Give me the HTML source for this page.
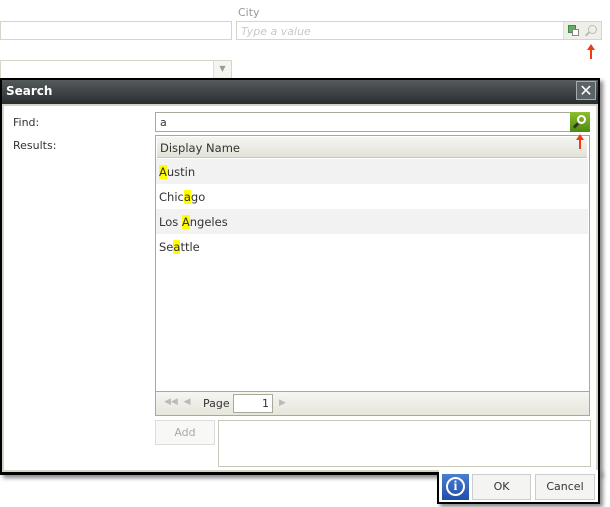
<!DOCTYPE html><html><head><style>
*{box-sizing:border-box}body{margin:0;width:610px;height:507px;background:#fff;position:relative;overflow:hidden;font-family:"DejaVu Sans","Liberation Sans",sans-serif;font-size:11px;color:#333}
.a{position:absolute}
</style></head><body>
<div class="a" style="left:0;top:21px;width:232px;height:19px;border:1px solid #d6d6c8"></div>
<div class="a" style="left:238px;top:6px;color:#999;font-size:11px">City</div>
<div class="a" style="left:236px;top:21px;width:366px;height:19px;border:1px solid #d6d6c8"></div>
<div class="a" style="left:241px;top:25px;color:#c8c8c8;font-style:italic">Type a value</div>
<div class="a" style="left:563px;top:22px;width:19px;height:17px;background:#efefe9;border-left:1px solid #ddd"><div class="a" style="left:4px;top:3px;width:8px;height:8px;background:#6a6;border:1px solid #484"></div><div class="a" style="left:8px;top:7px;width:7px;height:7px;background:#fff;border:1px solid #888"></div></div>
<div class="a" style="left:582px;top:22px;width:19px;height:17px;background:#efefe9"><div class="a" style="left:6px;top:3px;width:9px;height:9px;border:1px solid #bbb;border-radius:50%"></div><div class="a" style="left:3px;top:11px;width:5px;height:2px;background:#bbb;transform:rotate(-45deg)"></div></div>
<svg class="a" style="left:585px;top:43px" width="12" height="17"><path d="M6 16V5" stroke="#f03c14" stroke-width="2"/><path d="M2 7L6 1L10 7Z" fill="#f03c14"/></svg>
<div class="a" style="left:0;top:60px;width:232px;height:20px;border:1px solid #d6d6c8"><div class="a" style="right:0;top:0;width:18px;height:18px;background:#f4f4f0;border-left:1px solid #ddd;color:#999;font-size:8px;text-align:center;line-height:16px">▼</div></div>

<div class="a" style="left:0;top:78px;width:600px;height:397px;background:#000;box-shadow:3px 3px 4px #888"></div>
<div class="a" style="left:437px;top:470px;width:163px;height:34px;background:#000;box-shadow:3px 3px 4px #888"></div>
<div class="a" style="left:2px;top:80px;width:596px;height:24px;background:linear-gradient(#555a5c,#2a2e30)"></div>
<div class="a" style="left:6px;top:84px;color:#fff;font-weight:bold;font-size:12px">Search</div>
<div class="a" style="left:576px;top:81px;width:20px;height:19px;background:#5a6468;border:1px solid #aaa;color:#fff;font-size:16px;text-align:center;line-height:17px">✕</div>
<div class="a" style="left:2px;top:104px;width:596px;height:368px;background:#d4d4c4"></div>
<div class="a" style="left:4px;top:106px;width:592px;height:364px;background:#fff"></div>
<div class="a" style="left:439px;top:470px;width:159px;height:32px;background:#fff"></div>

<div class="a" style="left:13px;top:116px">Find:</div>
<div class="a" style="left:13px;top:139px">Results:</div>
<div class="a" style="left:155px;top:112px;width:416px;height:20px;border:1px solid #aaa89a;padding:3px 4px">a</div>
<div class="a" style="left:570px;top:112px;width:20px;height:20px;background:linear-gradient(#8cbf2c,#4f8a10)"><div class="a" style="left:7px;top:3px;width:9px;height:9px;border:2px solid #fff;border-radius:50%"></div><div class="a" style="left:3px;top:12px;width:6px;height:3px;background:#333;transform:rotate(-45deg)"></div></div>

<div class="a" style="left:155px;top:135px;width:435px;height:281px;border:1px solid #aaa89a"></div>
<div class="a" style="left:157px;top:137px;width:430px;height:21px;background:linear-gradient(#f6f6f2,#e2e2d8);border-bottom:1px solid #c8c8b8;padding:4px 3px;font-size:11.5px">Display Name</div>
<svg class="a" style="left:574px;top:133px" width="12" height="17"><path d="M6 16V5" stroke="#f03c14" stroke-width="2"/><path d="M2 7L6 1L10 7Z" fill="#f03c14"/></svg>
<div class="a" style="left:156px;top:159px;width:432px;height:25px;background:#f2f2f2;padding:6px 3px;font-size:11.5px"><span style="background:#ff0">A</span>ustin</div>
<div class="a" style="left:156px;top:184px;width:432px;height:25px;padding:6px 3px;font-size:11.5px">Chic<span style="background:#ff0">a</span>go</div>
<div class="a" style="left:156px;top:209px;width:432px;height:25px;background:#f2f2f2;padding:6px 3px;font-size:11.5px">Los <span style="background:#ff0">A</span>ngeles</div>
<div class="a" style="left:156px;top:234px;width:432px;height:25px;padding:6px 3px;font-size:11.5px">Se<span style="background:#ff0">a</span>ttle</div>
<div class="a" style="left:156px;top:391px;width:433px;height:24px;background:linear-gradient(#f6f6f2,#e6e6dc);border-top:1px solid #aaa89a"></div>
<div class="a" style="left:164px;top:397px;color:#bbb;font-size:9px">◀◀ &nbsp;◀</div>
<div class="a" style="left:203px;top:397px">Page</div>
<div class="a" style="left:233px;top:394px;width:40px;height:19px;background:#fff;border:1px solid #aaa89a;text-align:right;padding:2px 3px">1</div>
<div class="a" style="left:279px;top:398px;color:#bbb;font-size:9px">▶</div>
<div class="a" style="left:155px;top:420px;width:60px;height:25px;border:1px solid #ddd;background:#f8f8f6;color:#aaa;text-align:center;line-height:23px">Add</div>
<div class="a" style="left:218px;top:420px;width:373px;height:47px;border:1px solid #c8c8b8"></div>

<div class="a" style="left:442px;top:474px;width:27px;height:26px;background:linear-gradient(#4a7ed0,#1f4fa8)"><div class="a" style="left:4px;top:3px;width:19px;height:19px;border:2px solid #fff;border-radius:50%;color:#fff;font-weight:bold;text-align:center;line-height:15px;font-family:'Liberation Serif',serif;font-size:14px">i</div></div>
<div class="a" style="left:472px;top:474px;width:59px;height:26px;border:1px solid #ccc;background:#f4f4f2;text-align:center;line-height:24px">OK</div>
<div class="a" style="left:535px;top:474px;width:60px;height:26px;border:1px solid #ccc;background:#f4f4f2;text-align:center;line-height:24px">Cancel</div>
</body></html>
